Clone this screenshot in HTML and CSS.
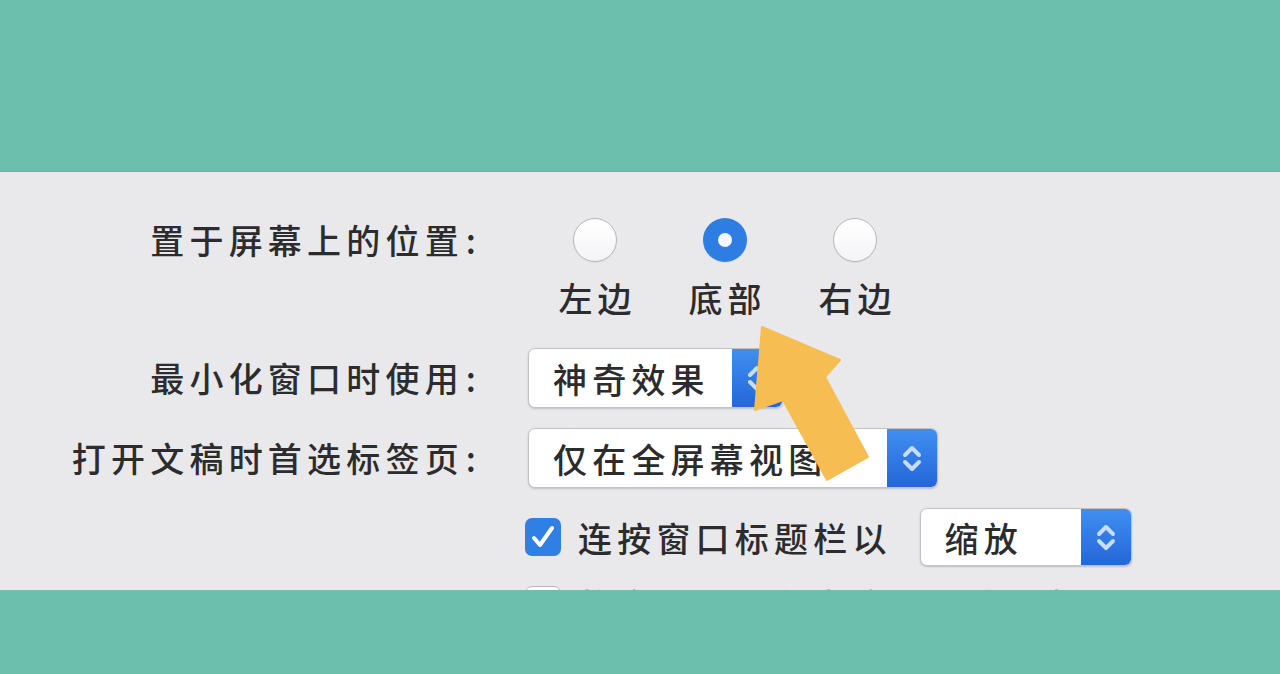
FILE: index.html
```html
<!DOCTYPE html>
<html lang="zh-CN">
<head>
  <meta charset="UTF-8">
  <meta name="viewport" content="width=device-width, initial-scale=1.0">
  <title>程序坞偏好设置</title>
  <link rel="stylesheet" href="styles.css">
</head>
<body>
  <div class="band band-top"></div>

  <main class="panel">
    <div class="row row-position">
      <span class="label">置于屏幕上的位置<span class="colon">:</span></span>
      <div class="radios">
        <div class="radio-item">
          <span class="radio"></span>
          <span class="radio-text">左边</span>
        </div>
        <div class="radio-item">
          <span class="radio checked"></span>
          <span class="radio-text">底部</span>
        </div>
        <div class="radio-item">
          <span class="radio"></span>
          <span class="radio-text">右边</span>
        </div>
      </div>
    </div>

    <div class="row">
      <span class="label">最小化窗口时使用<span class="colon">:</span></span>
      <div class="popup popup-effect">
        <span class="popup-text">神奇效果</span>
        <span class="stepper">
          <svg viewBox="0 0 50 60" width="50" height="60"><path d="M18 27 L25 20 L32 27 M18 34 L25 41 L32 34"/></svg>
        </span>
      </div>
    </div>

    <div class="row">
      <span class="label">打开文稿时首选标签页<span class="colon">:</span></span>
      <div class="popup popup-tabs">
        <span class="popup-text">仅在全屏幕视图</span>
        <span class="stepper">
          <svg viewBox="0 0 50 60" width="50" height="60"><path d="M18 27 L25 20 L32 27 M18 34 L25 41 L32 34"/></svg>
        </span>
      </div>
    </div>

    <div class="row">
      <span class="label"></span>
      <div class="check-line">
        <span class="checkbox checked">
          <svg viewBox="0 0 36 36" width="36" height="36"><path d="M9 19 L15 26 L27 9"/></svg>
        </span>
        <span class="check-text">连按窗口标题栏以</span>
        <div class="popup popup-zoom">
          <span class="popup-text">缩放</span>
          <span class="stepper">
            <svg viewBox="0 0 50 58" width="50" height="58"><path d="M18 26 L25 19 L32 26 M18 33 L25 40 L32 33"/></svg>
          </span>
        </div>
      </div>
    </div>

    <div class="row row-last">
      <span class="label"></span>
      <div class="check-line">
        <span class="checkbox"></span>
        <span class="check-text">将窗口最小化为应用程序图标</span>
      </div>
    </div>
  </main>

  <div class="band band-bottom"></div>

  <svg class="pointer" viewBox="0 0 1280 674" width="1280" height="674">
    <polygon points="762,327 840,360 825,377 868,457 827,480 783,400 755,410"/>
  </svg>
</body>
</html>
```

FILE: styles.css
```css
body {
  margin: 0;
  padding: 0;
  background-color: #6cbfac;
  font-family: "Noto Sans CJK SC", "Noto Sans", sans-serif;
  color: #2c2c2e;
  overflow: hidden;
}

.band {
  background-color: #6cbfac;
}

.band-top {
  height: 171px;
  border-bottom: 1px solid #63b09e;
}

.band-bottom {
  height: 84px;
}

.panel {
  height: 372px;
  padding-top: 46px;
  background-color: #e9e9eb;
  overflow: hidden;
  display: flex;
  flex-direction: column;
  gap: 20px;
}

.row {
  display: grid;
  grid-template-columns: 478px 1fr;
  column-gap: 50px;
  align-items: center;
  font-size: 34px;
  font-weight: 500;
  letter-spacing: 5.2px;
}

.row-position {
  align-items: start;
  margin-bottom: 12px;
}

.row-last {
  margin-top: -6px;
}

.label {
  justify-self: end;
  line-height: 44px;
  white-space: nowrap;
}

.colon {
  letter-spacing: 0;
  margin-left: 2px;
  margin-right: 2px;
}

.radios {
  display: flex;
  margin-left: 2px;
}

.radio-item {
  width: 130px;
  display: flex;
  flex-direction: column;
  align-items: center;
  gap: 18px;
}

.radio {
  width: 44px;
  height: 44px;
  box-sizing: border-box;
  border-radius: 50%;
  border: 1.5px solid #b7b7b9;
  background: linear-gradient(#ffffff, #f4f4f6);
  box-shadow: 0 1px 1px rgba(0, 0, 0, 0.06);
  position: relative;
}

.radio.checked {
  border: none;
  background: #2e7de2;
}

.radio.checked::after {
  content: "";
  position: absolute;
  left: 15px;
  top: 15px;
  width: 14px;
  height: 14px;
  border-radius: 50%;
  background: #f4f8ff;
}

.radio-text {
  line-height: 36px;
  margin-right: -5.2px;
}

.popup {
  height: 60px;
  box-sizing: border-box;
  display: flex;
  align-items: center;
  background: #ffffff;
  border: 1px solid #c2c2c4;
  border-radius: 7px;
  box-shadow: 0 1px 2px rgba(0, 0, 0, 0.18);
  overflow: hidden;
}

.popup-effect {
  width: 255px;
}

.popup-tabs {
  width: 410px;
}

.popup-zoom {
  width: 212px;
  height: 58px;
  margin-left: 28px;
}

.popup-text {
  flex: 1;
  padding-left: 24px;
  white-space: nowrap;
}

.stepper {
  width: 50px;
  height: 100%;
  display: flex;
  align-items: center;
  justify-content: center;
  background: linear-gradient(#3f8ff1, #2566d9);
}

.stepper svg path {
  fill: none;
  stroke: #c6defc;
  stroke-width: 4;
  stroke-linecap: round;
  stroke-linejoin: round;
}

.check-line {
  display: flex;
  align-items: center;
  margin-left: -3px;
}

.checkbox {
  width: 36px;
  height: 38px;
  box-sizing: border-box;
  border-radius: 7px;
  border: 1.5px solid #b7b7b9;
  background: #ffffff;
  margin-right: 17px;
  display: flex;
  align-items: center;
  justify-content: center;
}

.checkbox.checked {
  border: none;
  background: #2f7fe5;
}

.checkbox svg path {
  fill: none;
  stroke: #ffffff;
  stroke-width: 4;
  stroke-linecap: round;
  stroke-linejoin: round;
}

.check-text {
  white-space: nowrap;
}

.pointer {
  position: absolute;
  left: 0;
  top: 0;
  pointer-events: none;
}

.pointer polygon {
  fill: #f6bd52;
  stroke: #f6bd52;
  stroke-width: 2;
  stroke-linejoin: round;
}
```
